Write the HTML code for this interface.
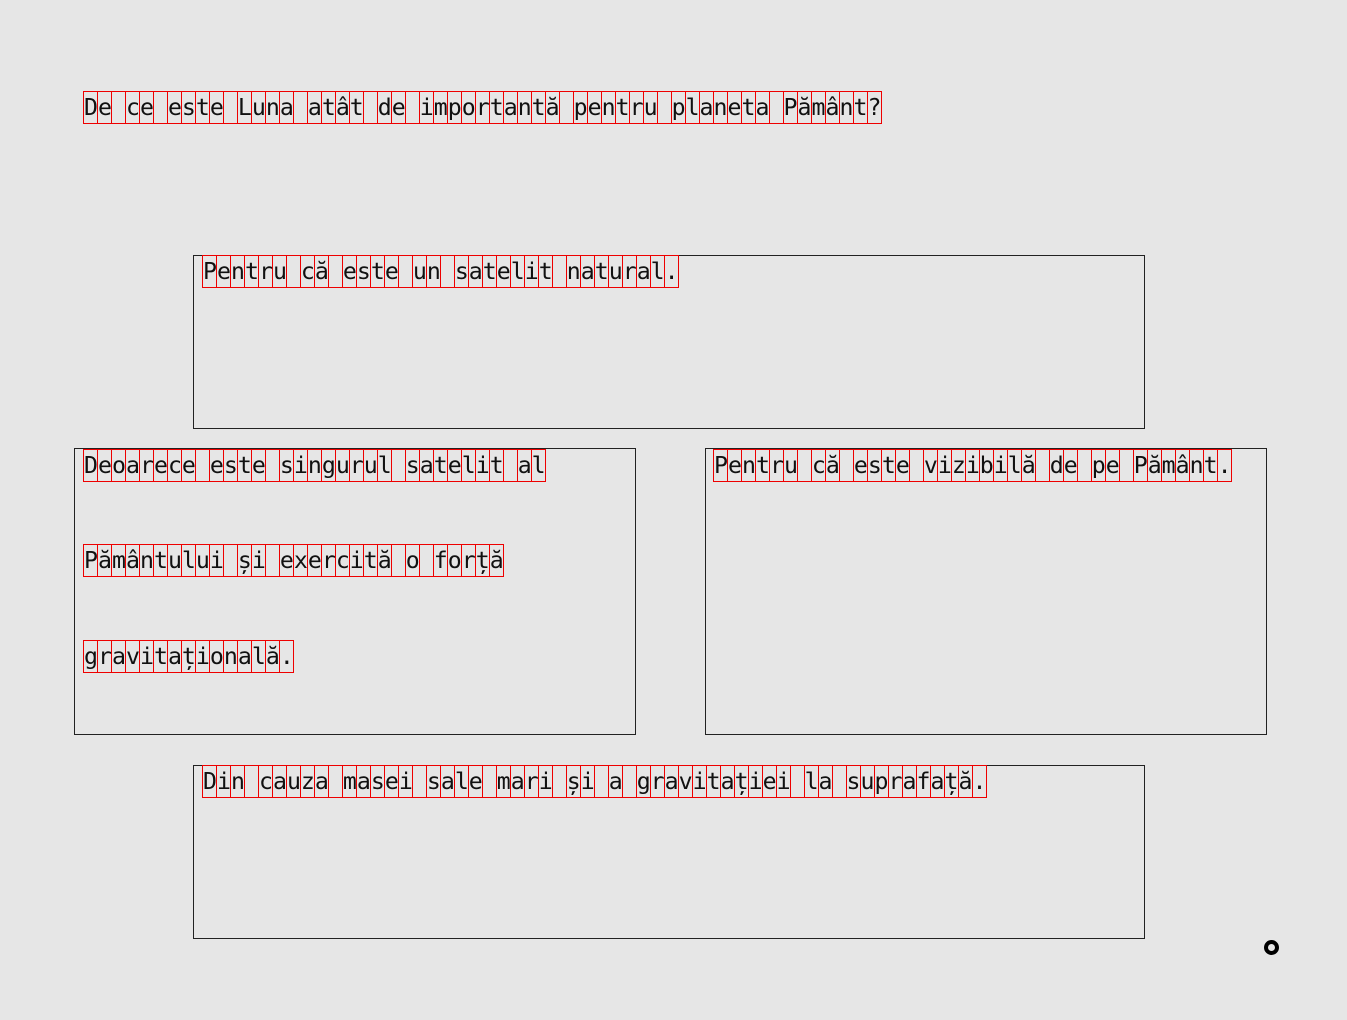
<!DOCTYPE html>
<html><head><meta charset="utf-8"><style>
html,body{margin:0;padding:0;}
body{width:1347px;height:1020px;background:#e6e6e6;position:relative;overflow:hidden;}
.t{position:absolute;display:block;height:31px;line-height:32px;white-space:pre;box-sizing:border-box;padding-left:1px;
font-family:"DejaVu Sans Mono","Liberation Mono",monospace;font-size:23.2px;letter-spacing:0.03px;color:#111;
border-top:1px solid #e00;border-bottom:1px solid #e00;border-right:1px solid #e00;height:33px;
background:repeating-linear-gradient(to right,#e00 0 1px,transparent 1px 14px);}
.b{position:absolute;border:1px solid #222;box-sizing:border-box;}
.c{position:absolute;left:1264px;top:940px;width:15px;height:15px;border:4px solid #000;border-radius:50%;box-sizing:border-box;}
</style></head><body>
<div class="t" style="left:83px;top:91px;width:799px">De ce este Luna atât de importantă pentru planeta Pământ?</div>

<div class="b" style="left:193px;top:255px;width:952px;height:174px"></div>
<div class="t" style="left:202px;top:255px;width:477px">Pentru că este un satelit natural.</div>

<div class="b" style="left:74px;top:448px;width:562px;height:287px"></div>
<div class="t" style="left:83px;top:449px;width:463px">Deoarece este singurul satelit al</div>
<div class="t" style="left:83px;top:544px;width:421px">Pământului și exercită o forță</div>
<div class="t" style="left:83px;top:640px;width:211px">gravitațională.</div>

<div class="b" style="left:705px;top:448px;width:562px;height:287px"></div>
<div class="t" style="left:713px;top:449px;width:519px">Pentru că este vizibilă de pe Pământ.</div>

<div class="b" style="left:193px;top:765px;width:952px;height:174px"></div>
<div class="t" style="left:202px;top:765px;width:785px">Din cauza masei sale mari și a gravitației la suprafață.</div>

<div class="c"></div>
</body></html>
